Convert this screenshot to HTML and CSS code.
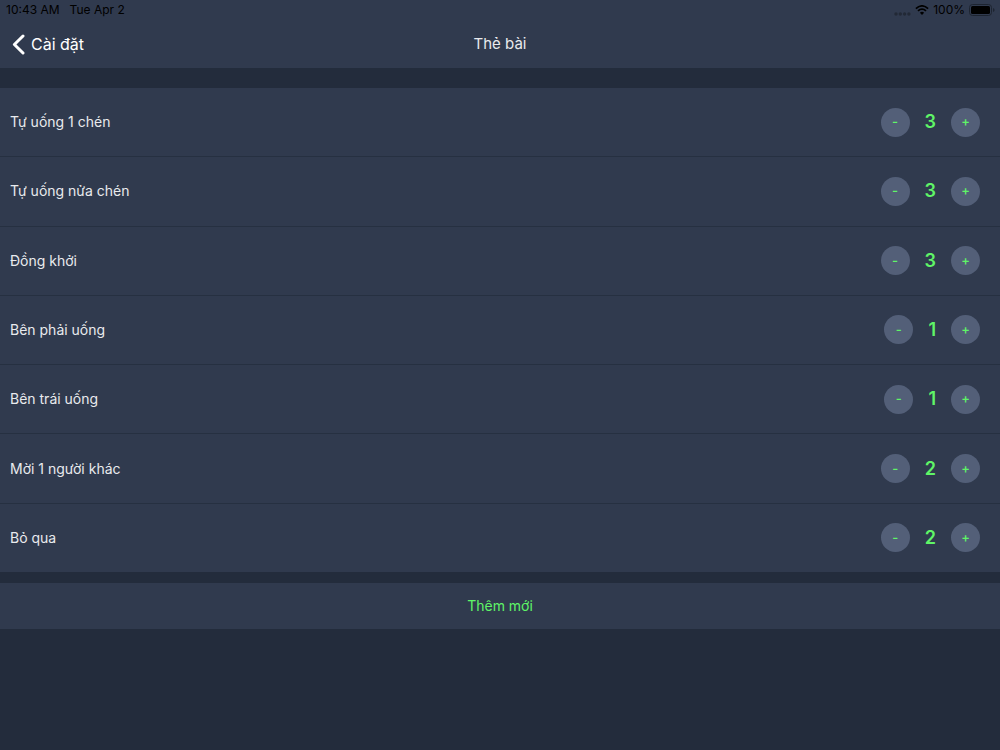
FILE: index.html
```html
<!DOCTYPE html>
<html lang="vi">
<head>
  <meta charset="UTF-8" />
  <meta name="viewport" content="width=device-width, initial-scale=1" />
  <title>Thẻ bài</title>
  <link rel="stylesheet" href="styles.css">
</head>
<body>

  <!-- Header -->
  <header class="header">
    <div class="status-bar">
      <div class="status-left">
        <span>10:43 AM</span>
        <span>Tue Apr 2</span>
      </div>
      <div class="status-right">
        <svg class="signal" width="17" height="4" viewBox="0 0 17 4">
          <circle cx="2" cy="2" r="1.7" />
          <circle cx="6.3" cy="2" r="1.7" />
          <circle cx="10.6" cy="2" r="1.7" />
          <circle cx="14.9" cy="2" r="1.7" />
        </svg>
        <svg class="wifi" width="14" height="10" viewBox="0 0 14 10">
          <path d="M0.9 3.6 Q7 -1.8 13.1 3.6" />
          <path d="M3 5.9 Q7 2.4 11 5.9" />
          <path class="wifi-dot" d="M4.9 7.7 Q7 5.9 9.1 7.7 L7 9.9 Z" />
        </svg>
        <span class="percent">100%</span>
        <svg class="battery" width="26" height="12" viewBox="0 0 26 12">
          <rect class="battery-case" x="0.5" y="0.5" width="22" height="11" rx="3" />
          <rect x="2" y="2" width="19" height="8" rx="1.5" />
          <path class="battery-tip" d="M24 4 Q25.6 4.6 25.6 6 Q25.6 7.4 24 8 Z" />
        </svg>
      </div>
    </div>
    <nav class="nav-bar">
      <a class="back" href="#">
        <svg width="13" height="21" viewBox="0 0 13 21">
          <path d="M11 2 L2.4 10.5 L11 19" />
        </svg>
        <span>Cài đặt</span>
      </a>
      <h1 class="title">Thẻ bài</h1>
    </nav>
  </header>

  <main>
    <!-- Card list -->
    <ul class="card-list">
      <li class="card">
        <span class="card-name">Tự uống 1 chén</span>
        <button class="round" aria-label="Bớt">-</button>
        <span class="count">3</span>
        <button class="round" aria-label="Thêm">+</button>
      </li>
      <li class="card">
        <span class="card-name">Tự uống nửa chén</span>
        <button class="round" aria-label="Bớt">-</button>
        <span class="count">3</span>
        <button class="round" aria-label="Thêm">+</button>
      </li>
      <li class="card">
        <span class="card-name">Đồng khởi</span>
        <button class="round" aria-label="Bớt">-</button>
        <span class="count">3</span>
        <button class="round" aria-label="Thêm">+</button>
      </li>
      <li class="card">
        <span class="card-name">Bên phải uống</span>
        <button class="round" aria-label="Bớt">-</button>
        <span class="count">1</span>
        <button class="round" aria-label="Thêm">+</button>
      </li>
      <li class="card">
        <span class="card-name">Bên trái uống</span>
        <button class="round" aria-label="Bớt">-</button>
        <span class="count">1</span>
        <button class="round" aria-label="Thêm">+</button>
      </li>
      <li class="card">
        <span class="card-name">Mời 1 người khác</span>
        <button class="round" aria-label="Bớt">-</button>
        <span class="count">2</span>
        <button class="round" aria-label="Thêm">+</button>
      </li>
      <li class="card">
        <span class="card-name">Bỏ qua</span>
        <button class="round" aria-label="Bớt">-</button>
        <span class="count">2</span>
        <button class="round" aria-label="Thêm">+</button>
      </li>
    </ul>

    <button class="add-button">Thêm mới</button>
  </main>

  <script>
    // plus / minus buttons
    document.querySelectorAll('.card').forEach(card => {
      const count = card.querySelector('.count');
      const [minus, plus] = card.querySelectorAll('.round');
      minus.addEventListener('click', () => {
        count.textContent = Math.max(0, Number(count.textContent) - 1);
      });
      plus.addEventListener('click', () => {
        count.textContent = Number(count.textContent) + 1;
      });
    });
  </script>

</body>
</html>
```

FILE: styles.css
```css
/* Reset & Body */
* {
  box-sizing: border-box;
}

body {
  margin: 0;
  min-height: 100vh;
  background: #232c3c;
  color: #e9eaed;
  font-family: Inter, Roboto, sans-serif;
  font-size: 14px;
  line-height: 20px;
}

button {
  border: none;
  padding: 0;
  font-family: inherit;
  color: #5ff567;
  cursor: pointer;
}

/* Header */
.header {
  background: #303a4e;
}

.status-bar {
  display: flex;
  justify-content: space-between;
  align-items: center;
  height: 20px;
  padding: 0 6px;
  color: #000;
  font-size: 12px;
}

.status-left {
  display: flex;
  gap: 10px;
}

.status-right {
  display: flex;
  align-items: center;
  gap: 4px;
  margin-right: -1px;
}

.signal {
  fill: #222936;
  margin-top: 7px;
}

.wifi path {
  fill: none;
  stroke: #000;
  stroke-width: 1.8;
}

.wifi .wifi-dot {
  fill: #000;
  stroke: none;
}

.battery-case {
  fill: none;
  stroke: #1d2430;
}

.battery-tip {
  fill: #1d2430;
}

.nav-bar {
  display: grid;
  grid-template-columns: 1fr auto 1fr;
  align-items: center;
  height: 48px;
  padding: 0 12px;
}

.back {
  display: flex;
  align-items: center;
  gap: 6px;
  color: #fff;
  font-size: 16px;
  text-decoration: none;
}

.back path {
  fill: none;
  stroke: #fff;
  stroke-width: 3;
  stroke-linecap: round;
  stroke-linejoin: round;
}

.title {
  margin: 0;
  font-size: 15px;
  font-weight: 400;
  line-height: 22px;
}

/* Card list */
.card-list {
  display: grid;
  min-height: 484px;
  margin: 20px 0 11px;
  padding: 0;
  list-style: none;
}

.card {
  display: flex;
  align-items: center;
  gap: 15px;
  padding: 0 20px 0 10px;
  background: #303a4e;
  border-bottom: 1px solid #263041;
}

.card:last-child {
  border-bottom: none;
}

.card-name {
  flex: 1;
}

.round {
  width: 29px;
  height: 29px;
  padding-bottom: 2px;
  border-radius: 50%;
  background: #535f78;
  font-size: 13px;
  font-weight: 500;
}

.count {
  color: #5ff567;
  font-size: 18px;
  font-weight: 600;
  line-height: 22px;
}

.add-button {
  display: block;
  width: 100%;
  height: 46px;
  padding-bottom: 2px;
  background: #303a4e;
  font-size: 14px;
}
```
